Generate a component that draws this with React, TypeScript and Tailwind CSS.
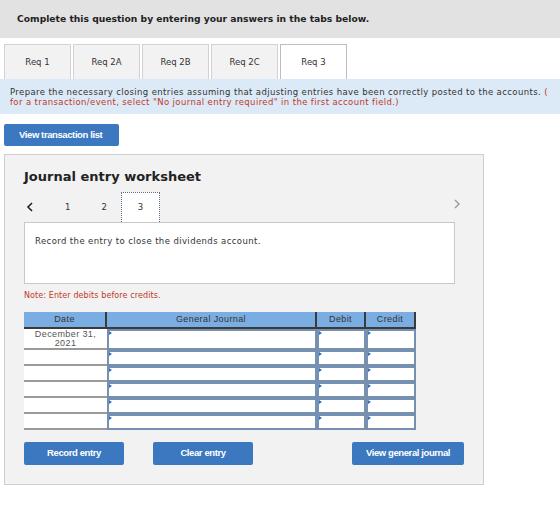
import React from "react";

const tabs = ["Req 1", "Req 2A", "Req 2B", "Req 2C", "Req 3"];

const Marker = () => (
  <span className="absolute left-0 top-0 h-0 w-0 border-y-[2px] border-l-[3px] border-y-transparent border-l-[#2f6fc4]" />
);

const InputCell = ({ w }: { w: string }) => (
  <div className={`relative h-full border-2 border-[#7590b0] bg-white ${w}`}>
    <Marker />
  </div>
);

const App = () => {
  const rows = [21, 16, 16, 16, 16, 16];

  return (
    <div className="h-[512px] w-[560px] overflow-hidden bg-white font-['DejaVu_Sans',sans-serif] text-[#333]">
      {/* Header */}
      <div className="flex h-[38px] items-center bg-[#e2e2e2] pl-[17px] text-[9.2px] font-bold text-[#222]">
        Complete this question by entering your answers in the tabs below.
      </div>

      {/* Tabs */}
      <div className="mt-[6px] flex gap-[2px] pl-[4px]">
        {tabs.map((t, i) => (
          <div
            key={t}
            className={`flex h-[35px] w-[67px] items-center justify-center border border-b-0 text-[8.5px] ${
              i === 4
                ? "border-[#bdbdbd] bg-white"
                : "border-[#d2d2d2] bg-[#f2f2f2]"
            }`}
          >
            {t}
          </div>
        ))}
      </div>

      {/* Instructions */}
      <div className="h-[35px] whitespace-nowrap bg-[#dceaf7] pl-[10px] pt-[8px] text-[8.5px] leading-[10px] tracking-[0.38px]">
        <div className="text-[#333]">
          Prepare the necessary closing entries assuming that adjusting entries
          have been correctly posted to the accounts.{" "}
          <span className="text-[#c0392b]">(</span>
        </div>
        <div className="text-[#c0392b]">
          for a transaction/event, select "No journal entry required" in the
          first account field.)
        </div>
      </div>

      <div className="pl-[4px] pt-[10px]">
        <button className="flex h-[22px] w-[115px] items-center rounded-[2px] bg-[#3b78c0] pl-[15px] font-['Liberation_Sans',sans-serif] text-[9.5px] font-bold tracking-[-0.4px] text-white">
          View transaction list
        </button>
      </div>

      {/* Worksheet */}
      <div className="ml-[4px] mt-[8px] h-[331px] w-[480px] border border-[#cfcfcf] bg-[#f2f2f2] pl-[19px] pt-[14px]">
        <div className="text-[13px] font-bold leading-[16px] text-[#222]">
          Journal entry worksheet
        </div>

        <div className="relative mt-[7px] flex h-[30px] w-[432px] items-center text-[8.5px]">
          <svg width="8" height="10" viewBox="0 0 8 10" className="ml-[2px]">
            <path d="M6 1 L2 5 L6 9" fill="none" stroke="#222" strokeWidth="1.6" />
          </svg>
          <span className="ml-[31px]">1</span>
          <span className="ml-[31px]">2</span>
          <div className="ml-[14px] flex h-[30px] w-[39px] items-center justify-center border border-b-0 border-dotted border-[#5a6f8a] bg-white">
            3
          </div>
          <svg width="8" height="10" viewBox="0 0 8 10" className="absolute right-[-5px] top-[7px]">
            <path d="M2 1 L6 5 L2 9" fill="none" stroke="#999" strokeWidth="1.4" />
          </svg>
        </div>

        <div className="h-[62px] w-[431px] border border-[#c8c8c8] bg-white pl-[10px] pt-[12px] text-[8.5px] tracking-[0.4px]">
          Record the entry to close the dividends account.
        </div>

        <div className="mt-[6px] text-[8px] tracking-[0.1px] text-[#c0392b]">
          Note: Enter debits before credits.
        </div>

        {/* Journal table */}
        <div className="mt-[10px] w-[392px] font-['Liberation_Sans',sans-serif] text-[9px] tracking-[0.4px]">
          <div className="flex h-[17px] border-b-2 border-[#3a3a3a] bg-[#7aade2] text-[#333]">
            <div className="flex w-[83px] items-center justify-center border-r-2 border-[#3a3a3a]">
              Date
            </div>
            <div className="flex w-[210px] items-center justify-center border-r-2 border-[#3a3a3a]">
              General Journal
            </div>
            <div className="flex w-[49px] items-center justify-center border-r-2 border-[#3a3a3a]">
              Debit
            </div>
            <div className="flex w-[50px] items-center justify-center border-r-2 border-[#3a3a3a]">
              Credit
            </div>
          </div>
          {rows.map((h, i) => (
            <div key={i} className="flex" style={{ height: h }}>
              <div className="flex h-full w-[83px] flex-col items-center border-b-2 border-[#9a9a9a] bg-white pt-[1px] leading-[9px] text-[#555]">
                {i === 0 && (
                  <>
                    <span>December 31,</span>
                    <span>2021</span>
                  </>
                )}
              </div>
              <InputCell w="w-[210px]" />
              <InputCell w="w-[49px]" />
              <InputCell w="w-[50px]" />
            </div>
          ))}
        </div>

        {/* Actions */}
        <div className="mt-[12px] flex w-[440px] font-['Liberation_Sans',sans-serif] text-[9.5px] font-bold tracking-[-0.4px] text-white">
          <button className="h-[23px] w-[100px] rounded-[2px] bg-[#3b78c0]">
            Record entry
          </button>
          <button className="ml-[29px] h-[23px] w-[100px] rounded-[2px] bg-[#3b78c0]">
            Clear entry
          </button>
          <button className="ml-auto h-[23px] w-[112px] rounded-[2px] bg-[#3b78c0]">
            View general journal
          </button>
        </div>
      </div>
    </div>
  );
};

export default App;
